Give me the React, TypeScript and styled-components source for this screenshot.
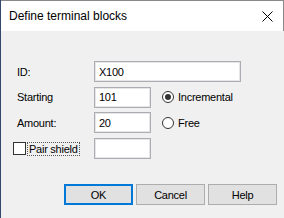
import styled, { createGlobalStyle } from "styled-components"

const Global = createGlobalStyle`
  html, body {
    margin: 0;
    padding: 0;
    background: #34466a;
  }
  body {
    font-family: "Liberation Sans", Arial, sans-serif;
  }
`

const Window = styled.div`
  width: 283px;
  height: 218px;
  margin-left: 1px;
  display: flex;
  flex-direction: column;
  background: #f0f0f0;
  box-sizing: border-box;
`

const TitleBar = styled.div`
  height: 31px;
  box-sizing: border-box;
  border-top: 1px solid #8a8a8a;
  border-right: 1px solid #8a8a8a;
  background: #fff;
  display: flex;
  align-items: center;
  justify-content: space-between;
  padding: 0 10px 0 8px;
`

const Title = styled.span`
  font-size: 12px;
  color: #000;
  margin-top: -1px;
`

const Body = styled.div`
  flex: 1;
  display: flex;
  flex-direction: column;
  padding: 30px 7px 0 16px;
`

const Form = styled.div`
  display: grid;
  grid-template-columns: 77px 57px 11px auto;
  grid-auto-rows: 21px;
  row-gap: 4.7px;
  align-items: center;
  font-size: 11px;
  letter-spacing: -0.25px;
  color: #000;
`

const Label = styled.span`
  grid-column: 1;
`

const Input = styled.div<{ $wide?: boolean }>`
  grid-column: ${(p) => (p.$wide ? "2 / span 3" : "2")};
  width: ${(p) => (p.$wide ? "147px" : "57px")};
  height: 21px;
  box-sizing: border-box;
  background: #fff;
  border: 1px solid #abadb3;
  box-shadow: inset 0 0 0 1px #e6e6e6;
  padding: 0 4px;
  display: flex;
  align-items: center;
`

const Radio = styled.label`
  grid-column: 4;
  display: flex;
  align-items: center;
  gap: 4px;
`

const Dot = styled.span<{ $on?: boolean }>`
  width: 12px;
  height: 12px;
  box-sizing: border-box;
  border-radius: 50%;
  border: 1px solid #333;
  background: #fff;
  display: flex;
  align-items: center;
  justify-content: center;
  &::after {
    content: "";
    width: 6px;
    height: 6px;
    border-radius: 50%;
    background: ${(p) => (p.$on ? "#333" : "transparent")};
  }
`

const Check = styled.label`
  grid-column: 1;
  margin-left: -4px;
  display: flex;
  align-items: center;
  gap: 1px;
`

const Box = styled.span`
  width: 13px;
  height: 13px;
  box-sizing: border-box;
  border: 1px solid #333;
  background: #fff;
`

const Focus = styled.span`
  border: 1px dotted #555;
  padding: 0 1px;
  line-height: 12px;
`

const Buttons = styled.div`
  display: flex;
  justify-content: flex-end;
  gap: 3px;
  margin-top: 25px;
`

const Button = styled.button<{ $default?: boolean }>`
  width: 69px;
  height: 21px;
  box-sizing: border-box;
  background: #e1e1e1;
  border: 1px solid ${(p) => (p.$default ? "#0078d7" : "#adadad")};
  box-shadow: ${(p) => (p.$default ? "inset 0 0 0 1px #0078d7" : "none")};
  font-family: "Liberation Sans", Arial, sans-serif;
  font-size: 11px;
  letter-spacing: -0.25px;
  color: #000;
  padding: 0;
`

export default function App() {
  return (
    <>
      <Global />
      <Window>
        <TitleBar>
          <Title>Define terminal blocks</Title>
          <svg width="11" height="11" viewBox="0 0 11 11">
            <path d="M0.5 0.5L10.5 10.5M10.5 0.5L0.5 10.5" stroke="#000" strokeWidth="1" />
          </svg>
        </TitleBar>
        <Body>
          <Form>
            <Label>ID:</Label>
            <Input $wide>X100</Input>
            <Label>Starting</Label>
            <Input>101</Input>
            <Radio>
              <Dot $on />
              Incremental
            </Radio>
            <Label>Amount:</Label>
            <Input>20</Input>
            <Radio>
              <Dot />
              Free
            </Radio>
            <Check>
              <Box />
              <Focus>Pair shield</Focus>
            </Check>
            <Input />
          </Form>
          <Buttons>
            <Button $default>OK</Button>
            <Button>Cancel</Button>
            <Button>Help</Button>
          </Buttons>
        </Body>
      </Window>
    </>
  )
}
